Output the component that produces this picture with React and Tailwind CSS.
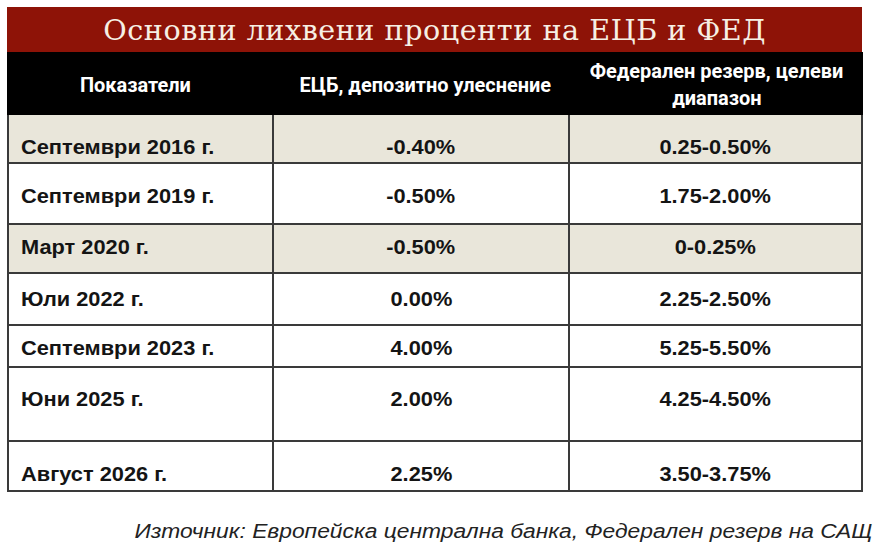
import React from "react";

const rows = [
  { label: "Септември 2016 г.", ecb: "-0.40%", fed: "0.25-0.50%", shade: true, h: "h-[47px]", pad: "pt-[16px]" },
  { label: "Септември 2019 г.", ecb: "-0.50%", fed: "1.75-2.00%", shade: false, h: "h-[61px]", pad: "pt-[4px]" },
  { label: "Март 2020 г.", ecb: "-0.50%", fed: "0-0.25%", shade: true, h: "h-[49px]", pad: "pb-[3px]" },
  { label: "Юли 2022 г.", ecb: "0.00%", fed: "2.25-2.50%", shade: false, h: "h-[52px]", pad: "" },
  { label: "Септември 2023 г.", ecb: "4.00%", fed: "5.25-5.50%", shade: false, h: "h-[42px]", pad: "pt-[4px]" },
  { label: "Юни 2025 г.", ecb: "2.00%", fed: "4.25-4.50%", shade: false, h: "h-[74px]", pad: "pb-[10px]" },
  { label: "Август 2026 г.", ecb: "2.25%", fed: "3.50-3.75%", shade: false, h: "h-[50px]", pad: "pt-[15px]" },
];

const sans = "font-['Liberation_Sans',Arial,sans-serif]";
const cond = "font-['Roboto','Liberation_Sans',sans-serif]";

function Wide({ children, className = "" }) {
  return <span className={`inline-block scale-x-[1.09] ${className}`}>{children}</span>;
}

function Narrow({ children }) {
  return <span className="inline-block scale-x-[0.95]">{children}</span>;
}

export default function App() {
  return (
    <div className="w-[883px] h-[556px] bg-white pt-[7px] pl-[7px]" lang="bg">
      <div className="w-[855px] h-[45px] bg-[#8e1307] flex items-center justify-center">
        <span className="inline-block scale-x-[1.06] font-['DejaVu_Serif','Liberation_Serif',serif] text-[27px] leading-none text-[#f6efe4] tracking-[0.5px] pt-[1px]">
          Основни лихвени проценти на ЕЦБ и ФЕД
        </span>
      </div>

      <div className="w-[856px]">
        <div className={`grid grid-cols-[267px_296px_293px] h-[63px] bg-black text-white ${cond} font-bold text-[21px]`}>
          <div className="flex items-center justify-center pr-[10px] pt-[4px]">
            <Narrow>Показатели</Narrow>
          </div>
          <div className="flex items-center justify-center pl-[6px] pt-[4px]">
            <Narrow>ЕЦБ, депозитно улеснение</Narrow>
          </div>
          <div className="flex flex-col items-center justify-center leading-[27px] pt-[2px]">
            <Narrow>Федерален резерв, целеви</Narrow>
            <Narrow>диапазон</Narrow>
          </div>
        </div>

        <div className={`border-l-2 border-r-2 border-b-2 border-[#3a3a3a] ${sans} font-bold text-[20px] text-[#141414]`}>
          {rows.map((r, i) => (
            <div
              key={r.label}
              className={`grid grid-cols-[265px_296px_291px] ${r.h} ${r.shade ? "bg-[#e9e6da]" : "bg-white"} ${
                i > 0 ? "border-t-2 border-[#3a3a3a]" : ""
              }`}
            >
              <div className={`flex items-center pl-[12px] border-r-2 border-[#3a3a3a] ${r.pad}`}>
                <Wide className="origin-left">{r.label}</Wide>
              </div>
              <div className={`flex items-center justify-center border-r-2 border-[#3a3a3a] ${r.pad}`}>
                <Wide>{r.ecb}</Wide>
              </div>
              <div className={`flex items-center justify-center ${r.pad}`}>
                <Wide>{r.fed}</Wide>
              </div>
            </div>
          ))}
        </div>

        <div className={`flex justify-end -mr-[9px] mt-[24px] ${sans} italic text-[20px] text-[#222]`}>
          <span className="inline-block scale-x-[1.14] origin-right">
            Източник: Европейска централна банка, Федерален резерв на САЩ
          </span>
        </div>
      </div>
    </div>
  );
}
